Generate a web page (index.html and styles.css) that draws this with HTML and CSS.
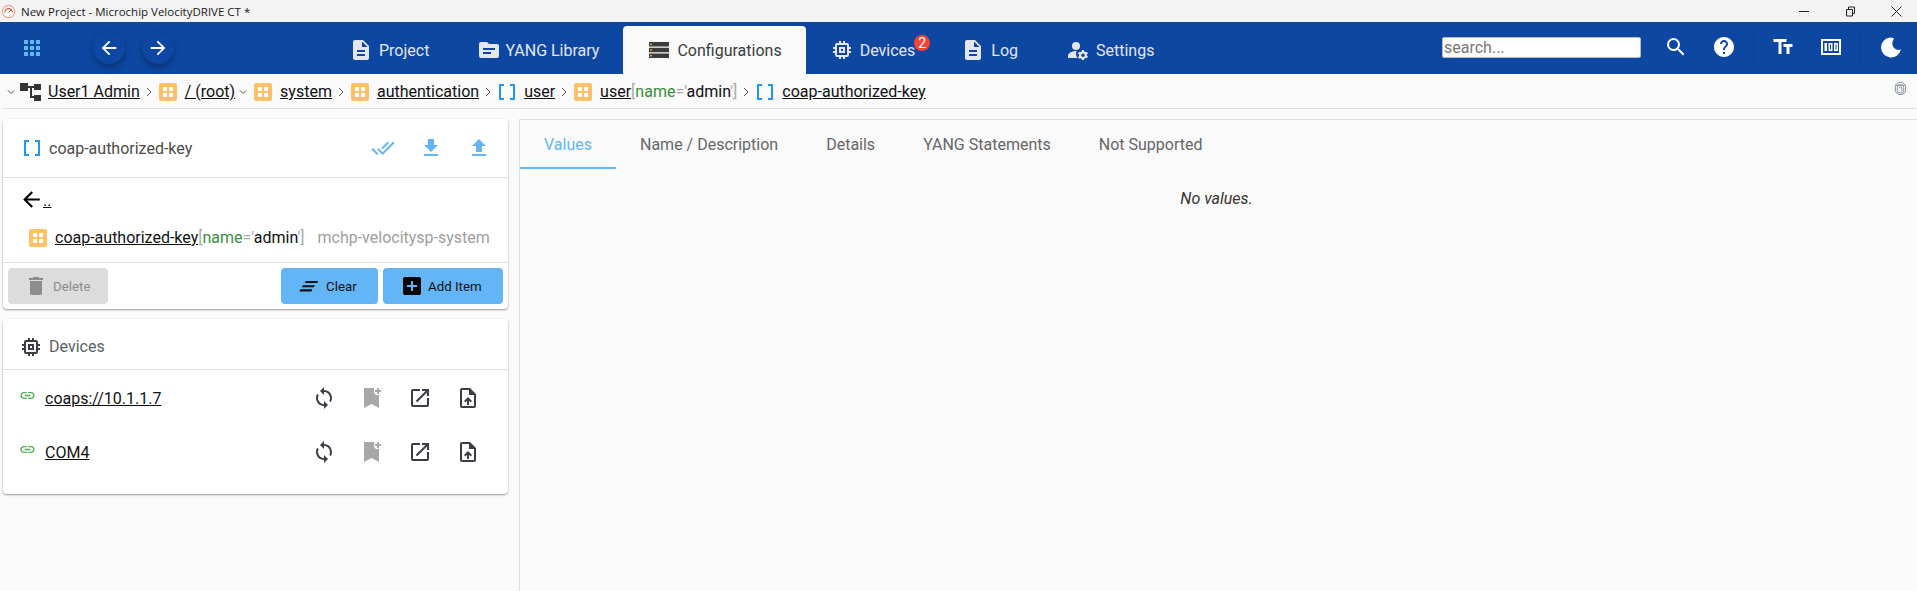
FILE: index.html
```html
<!DOCTYPE html>
<html>
<head>
<title>New Project - Microchip VelocityDRIVE CT *</title>
<link rel="stylesheet" href="styles.css">
</head>
<body>
<div class="titlebar">
  <svg class="app-logo" viewBox="0 0 16 16"><circle cx="8" cy="8" r="6.5" fill="#fff" stroke="#e8a090" stroke-width="1.2"/><path d="M4 9a4 4 0 0 1 8 0" fill="none" stroke="#d9583c" stroke-width="1.3"/><path d="M8 9l3-3" stroke="#555" stroke-width="1"/></svg>
  <span class="title-text">New Project - Microchip VelocityDRIVE CT *</span>
  <div class="win-btns">
    <svg viewBox="0 0 11 11"><path d="M0 5.500h10" stroke="#222" stroke-width="1"/></svg>
    <svg viewBox="0 0 11 11"><path d="M1.500 3.500h6v6.500h-6zM3.500 3.500v-2.500h6v6.500h-2" fill="none" stroke="#222" stroke-width="1"/></svg>
    <svg viewBox="0 0 11 11"><path d="M.5.500l10 10M10.500.500l-10 10" stroke="#222" stroke-width="1"/></svg>
  </div>
</div>

<div class="nav">
  <svg class="apps" viewBox="0 0 16 16" fill="#64b5f6"><path d="M0 0h4v4H0zM6 0h4v4H6zM12 0h4v4h-4zM0 6h4v4H0zM6 6h4v4H6zM12 6h4v4h-4zM0 12h4v4H0zM6 12h4v4H6zM12 12h4v4h-4z"/></svg>
  <div class="round-btns">
    <button class="round-btn"><svg viewBox="0 0 24 24" fill="#fff"><path d="M20 11H7.830l5.590-5.590L12 4l-8 8 8 8 1.410-1.410L7.830 13H20z"/></svg></button>
    <button class="round-btn"><svg viewBox="0 0 24 24" fill="#fff"><path d="M4 11h12.170l-5.590-5.590L12 4l8 8-8 8-1.410-1.410L16.170 13H4z"/></svg></button>
  </div>
  <div class="tabs">
    <div class="tab"><svg viewBox="0 0 24 24" fill="#e3e6ee"><path d="M14 2H6a2 2 0 0 0-2 2v16a2 2 0 0 0 2 2h12a2 2 0 0 0 2-2V8zm2 16H8v-2h8zm0-4H8v-2h8zm-3-5V3.500L18.500 9z"/></svg>Project</div>
    <div class="tab tab-yang"><svg viewBox="0 0 24 24" fill="#e3e6ee"><path d="M20 6h-8l-2-2H4a2 2 0 0 0-2 2v12a2 2 0 0 0 2 2h16a2 2 0 0 0 2-2V8a2 2 0 0 0-2-2zm-6 10H6v-2h8zm4-4H6v-2h12z"/></svg>YANG Library</div>
    <div class="tab active"><svg viewBox="0 0 24 24" fill="#3c3c3c"><path d="M2 4h20v4.500H2zM2 9.800h20v4.500H2zM2 15.600h20v4.500H2z"/><path d="M3 5.500h2V7H3zM3 11.300h2v1.500H3zM3 17.100h2v1.500H3z" fill="#d9a441"/></svg>Configurations</div>
    <div class="tab tab-devices"><svg viewBox="0 0 24 24" fill="#e3e6ee"><path d="M15 9H9v6h6zm-2 4h-2v-2h2zm8-2V9h-2V7a2 2 0 0 0-2-2h-2V3h-2v2h-2V3H9v2H7a2 2 0 0 0-2 2v2H3v2h2v2H3v2h2v2a2 2 0 0 0 2 2h2v2h2v-2h2v2h2v-2h2a2 2 0 0 0 2-2v-2h2v-2h-2v-2zm-4 6H7V7h10z"/></svg>Devices<span class="badge">2</span></div>
    <div class="tab"><svg viewBox="0 0 24 24" fill="#e3e6ee"><path d="M14 2H6a2 2 0 0 0-2 2v16a2 2 0 0 0 2 2h12a2 2 0 0 0 2-2V8zm2 16H8v-2h8zm0-4H8v-2h8zm-3-5V3.500L18.500 9z"/></svg>Log</div>
    <div class="tab"><svg viewBox="0 0 24 24" fill="#e3e6ee"><circle cx="10" cy="8" r="4"/><path d="M10.700 13C7 12.900 2 14.700 2 18v2h9.500a7 7 0 0 1-.8-7z"/><path d="M20.800 18c0-.2.1-.5.1-.8s0-.5-.1-.8l1.100-1-1-1.700-1.400.5c-.4-.3-.8-.6-1.300-.7L18 12h-2l-.3 1.500c-.5.100-.9.400-1.300.7l-1.400-.5-1 1.700 1.100 1c0 .3-.1.500-.1.800s0 .6.100.8l-1.100 1 1 1.700 1.400-.5c.4.300.8.600 1.300.7L16 22h2l.3-1.500c.5-.1.900-.4 1.300-.7l1.400.5 1-1.700zM17 19a1.800 1.800 0 1 1 0-3.600 1.800 1.800 0 0 1 0 3.600z"/></svg>Settings</div>
  </div>
  <div class="nav-right">
    <input class="search" type="text" placeholder="search...">
    <svg class="tool tool-search" viewBox="0 0 24 24" fill="#fff"><path d="M15.500 14h-.79l-.28-.27A6.471 6.471 0 0 0 16 9.500 6.500 6.500 0 1 0 9.500 16c1.610 0 3.090-.59 4.230-1.570l.27.28v.79l5 4.990L20.490 19l-4.990-5zm-6 0C7.010 14 5 11.990 5 9.500S7.010 5 9.500 5 14 7.010 14 9.500 11.990 14 9.500 14z"/></svg>
    <svg class="tool tool-help" viewBox="0 0 24 24" fill="#fff"><path d="M12 2C6.480 2 2 6.480 2 12s4.480 10 10 10 10-4.480 10-10S17.520 2 12 2zm1 17h-2v-2h2v2zm2.070-7.750l-.9.920C13.450 12.900 13 13.500 13 15h-2v-.5c0-1.100.45-2.100 1.170-2.830l1.240-1.260c.37-.36.59-.86.59-1.410 0-1.100-.9-2-2-2s-2 .9-2 2H8c0-2.210 1.790-4 4-4s4 1.790 4 4c0 .88-.36 1.680-.93 2.250z"/></svg>
    <span class="nav-sep"></span>
    <svg class="tool tool-font" viewBox="0 0 24 24" fill="#fff"><path d="M2.500 4v3h5v12h3V7h5V4zm19 5h-9v3h3v7h3v-7h3z"/></svg>
    <svg class="tool tool-pct" viewBox="0 0 24 24"><path d="M2 4h20v16H2z" fill="#fff"/><path d="M4 6h16v12H4z" fill="#0d47a1"/><path d="M5.500 8h2.500v8H5.500zM9.500 8h4v8h-4zM15 8h4v8h-4z" fill="#fff"/><path d="M11 9.500h1v5h-1zM16.500 9.500h1v5h-1z" fill="#0d47a1"/></svg>
    <span class="nav-sep"></span>
    <svg class="tool tool-moon" viewBox="0 0 24 24" fill="#fff"><path d="M11 2.500a10 10 0 1 0 10.900 11.800 7 7 0 0 1-2.400.6A6.500 6.500 0 0 1 14 5.500l1-2.300a10 10 0 0 0-4-.7z"/></svg>
  </div>
</div>

<div class="crumbs">
  <svg class="chev-down" viewBox="0 0 10 10"><path d="M2 3.500l3 3 3-3" fill="none" stroke="#555" stroke-width="1"/></svg>
  <svg class="org" viewBox="0 0 21 18" fill="#333"><path d="M0 0h8v8H0zM14 1h7v6h-7zM14 12h7v6h-7zM8 3h6v2H12v8h2v2h-4V5H8z"/></svg>
  <a class="crumb-link">User1 Admin</a>
  <svg class="sep" viewBox="0 0 6 10"><path d="M1 1l4 4-4 4" fill="none" stroke="#555" stroke-width="1"/></svg>
  <span class="box-icon"></span>
  <a class="crumb-link">/ (root)</a>
  <svg class="chev-down chev-root" viewBox="0 0 10 10"><path d="M2 3.500l3 3 3-3" fill="none" stroke="#555" stroke-width="1"/></svg>
  <span class="box-icon"></span>
  <a class="crumb-link">system</a>
  <svg class="sep" viewBox="0 0 6 10"><path d="M1 1l4 4-4 4" fill="none" stroke="#555" stroke-width="1"/></svg>
  <span class="box-icon"></span>
  <a class="crumb-link">authentication</a>
  <svg class="sep" viewBox="0 0 6 10"><path d="M1 1l4 4-4 4" fill="none" stroke="#555" stroke-width="1"/></svg>
  <span class="list-icon"></span>
  <a class="crumb-link">user</a>
  <svg class="sep" viewBox="0 0 6 10"><path d="M1 1l4 4-4 4" fill="none" stroke="#555" stroke-width="1"/></svg>
  <span class="box-icon"></span>
  <span><a class="crumb-link">user</a><span class="br">[</span><span class="k">name</span><span class="br">='</span>admin<span class="br">']</span></span>
  <svg class="sep" viewBox="0 0 6 10"><path d="M1 1l4 4-4 4" fill="none" stroke="#555" stroke-width="1"/></svg>
  <span class="list-icon"></span>
  <a class="crumb-link">coap-authorized-key</a>
  <svg class="finger" viewBox="0 0 14 14" fill="none" stroke="#7d8794" stroke-width="1"><path d="M1.500 5a5.500 4.500 0 0 1 11 0v4a5.500 4.500 0 0 1-11 0zM3.500 6a3.500 3 0 0 1 7 0v3a3.500 3 0 0 1-7 0zM5.500 7a1.500 1.500 0 0 1 3 0v3M2 3.500h10"/></svg>
</div>

<div class="main">
  <div class="side">
    <div class="card">
      <div class="card-head head-node">
        <span class="list-icon"></span>
        <span class="card-title">coap-authorized-key</span>
        <div class="head-actions">
          <svg viewBox="0 0 24 24" fill="#64b5f6"><path d="M18 7l-1.410-1.410-6.340 6.340 1.410 1.410L18 7zm4.240-1.410L11.660 16.170 7.480 12l-1.410 1.410L11.660 19l12-12-1.420-1.410zM.41 13.410L6 19l1.410-1.410L1.830 12 .41 13.410z"/></svg>
          <svg viewBox="0 0 24 24" fill="#64b5f6"><path d="M19 9h-4V3H9v6H5l7 7 7-7zM5 18v2h14v-2H5z"/></svg>
          <svg viewBox="0 0 24 24" fill="#64b5f6"><path d="M9 16h6v-6h4l-7-7-7 7h4v6zm-4 2h14v2H5v-2z"/></svg>
        </div>
      </div>
      <div class="node-body">
        <div class="back-row">
          <svg viewBox="0 0 24 24"><path d="M20 11H7.830l5.590-5.590L12 4l-8 8 8 8 1.410-1.410L7.830 13H20z"/></svg>
          <a class="crumb-link dots">..</a>
        </div>
        <div class="node-row">
          <span class="box-icon"></span>
          <span><a class="crumb-link">coap-authorized-key</a><span class="br">[</span><span class="k">name</span><span class="br">='</span>admin<span class="br">']</span></span>
          <span class="module">mchp-velocitysp-system</span>
        </div>
      </div>
      <div class="card-actions">
        <button class="btn btn-off"><svg viewBox="0 0 24 24" fill="#8d8d8d"><path d="M6 19a2 2 0 0 0 2 2h8a2 2 0 0 0 2-2V7H6zM19 4h-3.500l-1-1h-5l-1 1H5v2h14z"/></svg>Delete</button>
        <span class="grow"></span>
        <button class="btn btn-clear"><svg viewBox="0 0 24 24" fill="#111"><path d="M8 6h15l-1 2.500H7zM4.500 11H19l-1 2.500H3.500zM1.500 16H16l-1 2.500H.5z"/></svg>Clear</button>
        <button class="btn btn-add"><svg viewBox="0 0 24 24"><rect x="3" y="3" width="18" height="18" rx="2" fill="#050505"/><path d="M11 7h2v4h4v2h-4v4h-2v-4H7v-2h4z" fill="#64b5f6"/></svg>Add Item</button>
      </div>
    </div>

    <div class="card">
      <div class="card-head head-dev">
        <svg class="chip" viewBox="0 0 24 24" fill="#3c3c46"><path d="M15 9H9v6h6zm-2 4h-2v-2h2zm8-2V9h-2V7a2 2 0 0 0-2-2h-2V3h-2v2h-2V3H9v2H7a2 2 0 0 0-2 2v2H3v2h2v2H3v2h2v2a2 2 0 0 0 2 2h2v2h2v-2h2v2h2v-2h2a2 2 0 0 0 2-2v-2h2v-2h-2v-2zm-4 6H7V7h10z"/></svg>
        <span class="card-title dev-title">Devices</span>
      </div>
      <div class="dev-list">
        <div class="dev-row">
          <svg class="link-ico" viewBox="0 0 24 24" fill="#4caf50"><path d="M3.900 12c0-1.710 1.390-3.100 3.100-3.100h4V7H7c-2.760 0-5 2.240-5 5s2.240 5 5 5h4v-1.900H7c-1.710 0-3.100-1.390-3.100-3.100zM8 13h8v-2H8v2zm9-6h-4v1.900h4c1.710 0 3.100 1.390 3.100 3.100s-1.390 3.100-3.100 3.100h-4V17h4c2.760 0 5-2.240 5-5s-2.240-5-5-5z"/></svg>
          <a class="crumb-link dev-name">coaps://10.1.1.7</a>
          <div class="dev-actions">
            <svg viewBox="0 0 24 24" fill="#3c3c46"><path d="M12 4V1L8 5l4 4V6c3.310 0 6 2.690 6 6 0 1.010-.25 1.970-.7 2.800l1.460 1.460A7.930 7.930 0 0 0 20 12c0-4.420-3.580-8-8-8zm0 14c-3.310 0-6-2.690-6-6 0-1.010.25-1.970.7-2.800L5.240 7.740A7.930 7.930 0 0 0 4 12c0 4.420 3.580 8 8 8v3l4-4-4-4v3z"/></svg>
            <svg viewBox="0 0 24 24" fill="#a8a8a8"><path d="M4 2h10v5l2 2h3v13l-7.500-4L4 22zM17 2h2v2h2v2h-2v2h-2V6h-2V4h2z"/></svg>
            <svg viewBox="0 0 24 24" fill="#3c3c46"><path d="M19 19H5V5h7V3H5a2 2 0 0 0-2 2v14a2 2 0 0 0 2 2h14a2 2 0 0 0 2-2v-7h-2zM14 3v2h3.590l-9.830 9.830 1.410 1.410L19 6.410V10h2V3z"/></svg>
            <svg viewBox="0 0 24 24" fill="#3c3c46"><path d="M14 2H6a2 2 0 0 0-2 2v16a2 2 0 0 0 2 2h12a2 2 0 0 0 2-2V8zm4 18H6V4h7v5h5zM8 15l1.410 1.410L11 14.830V19h2v-4.170l1.590 1.580L16 15l-4-4z"/></svg>
          </div>
        </div>
        <div class="dev-row">
          <svg class="link-ico" viewBox="0 0 24 24" fill="#4caf50"><path d="M3.900 12c0-1.710 1.390-3.100 3.100-3.100h4V7H7c-2.760 0-5 2.240-5 5s2.240 5 5 5h4v-1.900H7c-1.710 0-3.100-1.390-3.100-3.100zM8 13h8v-2H8v2zm9-6h-4v1.900h4c1.710 0 3.100 1.390 3.100 3.100s-1.390 3.100-3.100 3.100h-4V17h4c2.760 0 5-2.240 5-5s-2.240-5-5-5z"/></svg>
          <a class="crumb-link dev-name">COM4</a>
          <div class="dev-actions">
            <svg viewBox="0 0 24 24" fill="#3c3c46"><path d="M12 4V1L8 5l4 4V6c3.310 0 6 2.690 6 6 0 1.010-.25 1.970-.7 2.800l1.460 1.460A7.930 7.930 0 0 0 20 12c0-4.420-3.580-8-8-8zm0 14c-3.310 0-6-2.690-6-6 0-1.010.25-1.970.7-2.800L5.240 7.740A7.930 7.930 0 0 0 4 12c0 4.420 3.580 8 8 8v3l4-4-4-4v3z"/></svg>
            <svg viewBox="0 0 24 24" fill="#a8a8a8"><path d="M4 2h10v5l2 2h3v13l-7.500-4L4 22zM17 2h2v2h2v2h-2v2h-2V6h-2V4h2z"/></svg>
            <svg viewBox="0 0 24 24" fill="#3c3c46"><path d="M19 19H5V5h7V3H5a2 2 0 0 0-2 2v14a2 2 0 0 0 2 2h14a2 2 0 0 0 2-2v-7h-2zM14 3v2h3.590l-9.830 9.830 1.410 1.410L19 6.410V10h2V3z"/></svg>
            <svg viewBox="0 0 24 24" fill="#3c3c46"><path d="M14 2H6a2 2 0 0 0-2 2v16a2 2 0 0 0 2 2h12a2 2 0 0 0 2-2V8zm4 18H6V4h7v5h5zM8 15l1.410 1.410L11 14.830V19h2v-4.170l1.590 1.580L16 15l-4-4z"/></svg>
          </div>
        </div>
      </div>
    </div>
  </div>

  <div class="content">
    <div class="content-tabs">
      <div class="ctab ctab-on">Values</div>
      <div class="ctab">Name / Description</div>
      <div class="ctab">Details</div>
      <div class="ctab">YANG Statements</div>
      <div class="ctab">Not Supported</div>
    </div>
    <div class="no-values">No values.</div>
  </div>
</div>
</body>
</html>
```

FILE: styles.css
```css
body {
  margin: 0;
  height: 100vh;
  display: flex;
  flex-direction: column;
  background: #fafafa;
  color: #111;
  font-family: Roboto, "Liberation Sans", sans-serif;
  font-size: 16px;
  overflow: hidden;
}

svg {
  flex: none;
  display: block;
}

button {
  font-family: inherit;
}

.titlebar {
  height: 22px;
  flex: none;
  background: #f3f3f3;
  display: flex;
  align-items: center;
  padding-left: 1px;
}

.app-logo {
  width: 15px;
  height: 15px;
}

.title-text {
  margin-left: 5px;
  font-family: "Open Sans", sans-serif;
  font-size: 11.5px;
  color: #1a1a1a;
}

.win-btns {
  margin-left: auto;
  display: flex;
  gap: 35px;
  padding-right: 15px;
}

.win-btns svg {
  width: 11px;
  height: 11px;
}

.nav {
  height: 52px;
  flex: none;
  background: #0d47a1;
  display: flex;
  align-items: flex-end;
}

.apps {
  width: 16px;
  height: 16px;
  margin: 0 0 18px 24px;
}

.round-btns {
  display: flex;
  gap: 17px;
  margin: 0 0 10px 53px;
}

.round-btn {
  width: 32px;
  height: 32px;
  padding: 0;
  border: none;
  border-radius: 50%;
  background: #0d47a1;
  box-shadow: 0 3px 6px rgba(0, 0, 0, 0.3);
  display: flex;
  align-items: center;
  justify-content: center;
}

.round-btn svg {
  width: 22px;
  height: 22px;
}

.tabs {
  display: flex;
  margin-left: 151px;
  height: 48px;
}

.tab {
  display: flex;
  align-items: center;
  gap: 6px;
  color: #e3e6ee;
  padding: 0 24px;
  position: relative;
}

.tab svg {
  width: 24px;
  height: 24px;
}

.tab-yang {
  gap: 4px;
}

.tab-devices {
  padding-right: 22px;
}

.tab.active {
  background: #fafafa;
  color: #3c3c3c;
  border-radius: 4px 4px 0 0;
}

.badge {
  position: absolute;
  top: 9px;
  right: 7px;
  width: 16px;
  height: 16px;
  border-radius: 50%;
  background: #f44336;
  color: #fff;
  font-size: 14px;
  line-height: 16px;
  text-align: center;
}

.nav-right {
  margin-left: auto;
  align-self: flex-start;
  display: flex;
  align-items: center;
  height: 50px;
  padding-right: 14px;
}

.search {
  width: 199px;
  height: 21px;
  box-sizing: border-box;
  border: 1px solid #bbb;
  border-radius: 2px;
  padding: 0 1px;
  font-family: Roboto, sans-serif;
  font-size: 16px;
  background: #fff;
}

.search::placeholder {
  color: #777;
}

.tool {
  width: 24px;
  height: 24px;
}

.tool-search {
  margin-left: 23px;
}

.tool-help {
  margin-left: 24px;
}

.nav-sep {
  width: 1px;
  height: 32px;
  background: #0b3f90;
  margin-left: 17px;
}

.tool-font {
  margin-left: 17px;
}

.tool-pct {
  margin-left: 24px;
}

.tool-moon {
  margin-left: 18px;
}

.crumbs {
  height: 35px;
  flex: none;
  box-sizing: border-box;
  margin: 0 1px 0 3px;
  border-bottom: 1px solid #dedede;
  display: flex;
  align-items: center;
  padding: 1px 9px 0 3px;
}

.chev-down {
  width: 10px;
  height: 10px;
}

.org {
  width: 21px;
  height: 18px;
  margin: 0 7px 0 4px;
}

.crumb-link {
  color: #111;
  text-decoration: underline;
}

.sep {
  width: 6px;
  height: 10px;
  margin: 0 7px 0 6px;
}

.box-icon {
  flex: none;
  width: 18px;
  height: 18px;
  border-radius: 2px;
  margin-right: 8px;
  background-color: #ffc168;
  background-image:
    linear-gradient(#ffc168, #ffc168),
    linear-gradient(#ffc168, #ffc168),
    linear-gradient(#fff, #fff);
  background-size: 2px 100%, 100% 2px, 10px 10px;
  background-position: center;
  background-repeat: no-repeat;
}

.list-icon {
  flex: none;
  width: 16px;
  height: 16px;
  margin-right: 9px;
  background:
    linear-gradient(#2196f3, #2196f3) left / 2px 100% no-repeat,
    linear-gradient(#2196f3, #2196f3) right / 2px 100% no-repeat,
    linear-gradient(#2196f3, #2196f3) left top / 5px 2px no-repeat,
    linear-gradient(#2196f3, #2196f3) right top / 5px 2px no-repeat,
    linear-gradient(#2196f3, #2196f3) left bottom / 5px 2px no-repeat,
    linear-gradient(#2196f3, #2196f3) right bottom / 5px 2px no-repeat;
}

.crumbs .list-icon {
  margin: 0 9px 0 1px;
}

.chev-root {
  margin: 0 6px 0 3px;
}

.br {
  color: #aaa;
}

.k {
  color: #388e3c;
}

.finger {
  width: 13px;
  height: 13px;
  margin: 0 0 6px auto;
}

.main {
  flex: 1;
  display: flex;
  padding-top: 10px;
  min-height: 0;
}

.side {
  width: 505px;
  margin-left: 3px;
  display: flex;
  flex-direction: column;
  gap: 10px;
  flex: none;
}

.card {
  background: #fff;
  border-radius: 4px;
  box-shadow: 0 1px 2px rgba(0, 0, 0, 0.4);
}

.card-head {
  display: flex;
  align-items: center;
  border-bottom: 1px solid #e0e0e0;
  box-sizing: border-box;
}

.head-node {
  height: 59px;
  padding-left: 21px;
}

.card-title {
  color: #4a4a4a;
}

.dev-title {
  color: #5a5f66;
}

.head-actions {
  margin-left: auto;
  display: flex;
  gap: 24px;
  padding-right: 17px;
}

.head-actions svg {
  width: 24px;
  height: 24px;
}

.node-body {
  height: 85px;
  box-sizing: border-box;
  border-bottom: 1px solid #e0e0e0;
  padding: 9px 0 0 16px;
}

.back-row {
  display: flex;
  align-items: center;
  height: 24px;
}

.back-row svg {
  width: 25px;
  height: 25px;
}

.dots {
  margin: 3px 0 0 -1px;
}

.node-row {
  display: flex;
  align-items: center;
  margin: 17px 0 0 10px;
  white-space: nowrap;
}

.module {
  color: #9e9e9e;
  margin-left: 13px;
}

.card-actions {
  display: flex;
  align-items: center;
  gap: 5px;
  padding: 5px;
}

.grow {
  flex: 1;
}

.btn {
  height: 36px;
  border: none;
  border-radius: 4px;
  display: flex;
  align-items: center;
  font-size: 13.3px;
  color: #111;
  background: #64b5f6;
  padding: 0;
}

.btn svg {
  width: 24px;
  height: 24px;
}

.btn-off {
  width: 100px;
  padding-left: 16px;
  gap: 5px;
  background: #dcdcdc;
  color: #8d8d8d;
}

.btn-clear {
  width: 97px;
  padding-left: 17px;
  gap: 4px;
}

.btn-clear svg {
  width: 20px;
  height: 20px;
  margin-left: 1px;
  margin-right: 3px;
}

.btn-add {
  width: 120px;
  padding-left: 17px;
  gap: 4px;
}

.head-dev {
  height: 51px;
  padding: 5px 0 0 16px;
  gap: 6px;
}

.chip {
  width: 24px;
  height: 24px;
}

.dev-list {
  padding: 1px 0 15px;
}

.dev-row {
  height: 54px;
  display: flex;
  align-items: center;
  padding-left: 16px;
}

.link-ico {
  width: 17px;
  height: 17px;
  margin-bottom: 5px;
}

.dev-name {
  margin-left: 9px;
}

.dev-actions {
  margin-left: auto;
  display: flex;
  gap: 24px;
  padding-right: 28px;
}

.dev-actions svg {
  width: 24px;
  height: 24px;
}

.content {
  flex: 1;
  margin-left: 11px;
  border-top: 1px solid #e0e0e0;
  border-left: 1px solid #e0e0e0;
}

.content-tabs {
  display: flex;
  height: 49px;
  color: #666;
}

.ctab {
  padding: 0 24px;
  line-height: 50px;
  box-sizing: border-box;
}

.ctab-on {
  color: #64b5f6;
  border-bottom: 2px solid #64b5f6;
}

.no-values {
  margin-top: 20px;
  padding-right: 4px;
  text-align: center;
  font-style: italic;
  color: #333;
}
```
